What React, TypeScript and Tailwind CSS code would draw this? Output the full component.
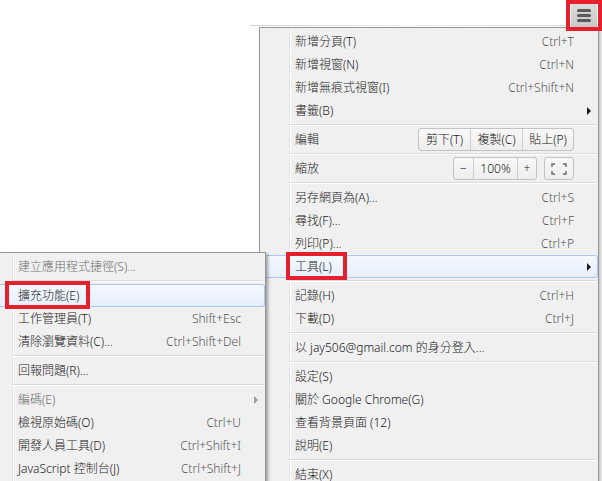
type Entry =
  | { kind: "sep" }
  | { kind: "item"; label: string; shortcut?: string; arrow?: boolean; disabled?: boolean; hl?: boolean }
  | { kind: "edit" }
  | { kind: "zoom" };

const mainMenu: Entry[] = [
  { kind: "item", label: "新增分頁(T)", shortcut: "Ctrl+T" },
  { kind: "item", label: "新增視窗(N)", shortcut: "Ctrl+N" },
  { kind: "item", label: "新增無痕式視窗(I)", shortcut: "Ctrl+Shift+N" },
  { kind: "item", label: "書籤(B)", arrow: true },
  { kind: "sep" },
  { kind: "edit" },
  { kind: "sep" },
  { kind: "zoom" },
  { kind: "sep" },
  { kind: "item", label: "另存網頁為(A)...", shortcut: "Ctrl+S" },
  { kind: "item", label: "尋找(F)...", shortcut: "Ctrl+F" },
  { kind: "item", label: "列印(P)...", shortcut: "Ctrl+P" },
  { kind: "item", label: "工具(L)", arrow: true, hl: true },
  { kind: "sep" },
  { kind: "item", label: "記錄(H)", shortcut: "Ctrl+H" },
  { kind: "item", label: "下載(D)", shortcut: "Ctrl+J" },
  { kind: "sep" },
  { kind: "item", label: "以 jay506@gmail.com 的身分登入..." },
  { kind: "sep" },
  { kind: "item", label: "設定(S)" },
  { kind: "item", label: "關於 Google Chrome(G)" },
  { kind: "item", label: "查看背景頁面 (12)" },
  { kind: "item", label: "說明(E)" },
  { kind: "sep" },
  { kind: "item", label: "結束(X)" },
];

const toolsMenu: Entry[] = [
  { kind: "item", label: "建立應用程式捷徑(S)...", disabled: true },
  { kind: "sep" },
  { kind: "item", label: "擴充功能(E)", hl: true },
  { kind: "item", label: "工作管理員(T)", shortcut: "Shift+Esc" },
  { kind: "item", label: "清除瀏覽資料(C)...", shortcut: "Ctrl+Shift+Del" },
  { kind: "sep" },
  { kind: "item", label: "回報問題(R)..." },
  { kind: "sep" },
  { kind: "item", label: "編碼(E)", arrow: true, disabled: true },
  { kind: "item", label: "檢視原始碼(O)", shortcut: "Ctrl+U" },
  { kind: "item", label: "開發人員工具(D)", shortcut: "Ctrl+Shift+I" },
  { kind: "item", label: "JavaScript 控制台(J)", shortcut: "Ctrl+Shift+J" },
];

function Arrow({ dim }: { dim?: boolean }) {
  return (
    <span
      className={
        "block h-0 w-0 border-y-[4px] border-l-[4px] border-y-transparent " +
        (dim ? "border-l-[#9a9a9a]" : "border-l-[#1a1a1a]")
      }
    />
  );
}

function FullscreenIcon() {
  return (
    <svg width="16" height="12" viewBox="0 0 16 12" fill="none" stroke="#6a6a6a" strokeWidth="1.4">
      <path d="M1 4V1h3M12 1h3v3M15 8v3h-3M4 11H1V8" />
    </svg>
  );
}

const btnGroup =
  "flex h-[23px] overflow-hidden rounded-[3px] border border-[#c3c3c3] bg-gradient-to-b from-[#f8f8f8] to-[#eeeeee]";

function Row({ e }: { e: Entry }) {
  if (e.kind === "sep") {
    return (
      <div className="flex h-[6px] flex-col justify-center pl-[29px] pr-[1px]">
        <div className="h-px bg-[#dcdcdc]" />
        <div className="h-px bg-white" />
      </div>
    );
  }
  if (e.kind === "edit") {
    return (
      <div className="flex h-[23px] items-center pl-[35px] pr-[24px]">
        <span className="flex-1">編輯</span>
        <div className={btnGroup}>
          <span className="flex w-[51px] items-center justify-center">剪下(T)</span>
          <span className="flex w-[52px] items-center justify-center border-l border-[#cfcfcf]">複製(C)</span>
          <span className="flex w-[51px] items-center justify-center border-l border-[#cfcfcf]">貼上(P)</span>
        </div>
      </div>
    );
  }
  if (e.kind === "zoom") {
    return (
      <div className="flex h-[23px] items-center pl-[35px] pr-[24px]">
        <span className="flex-1">縮放</span>
        <div className={btnGroup}>
          <span className="flex w-[19px] items-center justify-center">−</span>
          <span className="flex w-[44px] items-center justify-center border-l border-[#cfcfcf]">100%</span>
          <span className="flex w-[19px] items-center justify-center border-l border-[#cfcfcf]">+</span>
        </div>
        <div className="ml-[7px] flex h-[23px] w-[30px] items-center justify-center rounded-[3px] border border-[#c3c3c3] bg-gradient-to-b from-[#f8f8f8] to-[#eeeeee]">
          <FullscreenIcon />
        </div>
      </div>
    );
  }
  return (
    <div
      className={
        "flex h-[23px] items-center " +
        (e.hl
          ? "ml-[2px] rounded-[3px] bg-gradient-to-b from-[#f5f9fe] to-[#e6eefa] pl-[33px] shadow-[inset_0_0_0_1px_#a9c8ef]"
          : "pl-[35px]")
      }
    >
      <span className={"flex-1 whitespace-nowrap " + (e.disabled ? "text-[#6d6d6d]" : "")}>{e.label}</span>
      {e.shortcut && <span className="whitespace-nowrap text-[#555]">{e.shortcut}</span>}
      <span className="flex w-[24px] justify-start pl-[13px]">{e.arrow && <Arrow dim={e.disabled} />}</span>
    </div>
  );
}

function Menu({ items }: { items: Entry[] }) {
  return (
    <div className="flex flex-col pt-[2px]">
      {items.map((e, i) => (
        <Row key={i} e={e} />
      ))}
    </div>
  );
}

const gutter =
  "bg-[#f0f0f0] bg-[linear-gradient(to_right,transparent_29px,#e2e3e3_29px,#e2e3e3_30px,#ffffff_30px,#ffffff_31px,transparent_31px)]";

export default function App() {
  return (
    <div className="relative h-[481px] w-[602px] overflow-hidden bg-white font-['Segoe_UI','Noto_Sans','Noto_Sans_CJK_TC',sans-serif] text-[12px] font-light text-[#1a1a1a]">
      {/* toolbar edge */}
      <div className="absolute left-[250px] top-[25px] h-px w-[316px] bg-gradient-to-r from-[#cfcfcf] via-[#f2f2f2] to-[#dadada]" />

      {/* menu button */}
      <div className="absolute left-[571px] top-[3px] flex h-[24px] w-[26px] flex-col items-center justify-center gap-[2px] bg-gradient-to-b from-[#dcdcdc] to-[#c9c9c9]">
        <span className="h-[3px] w-[14px] rounded-full bg-[#5b5b5b]" />
        <span className="h-[3px] w-[14px] rounded-full bg-[#5b5b5b]" />
        <span className="h-[3px] w-[14px] rounded-full bg-[#5b5b5b]" />
      </div>

      {/* main chrome menu */}
      <div className={"absolute left-[259px] top-[27px] h-[470px] w-[340px] border border-[#979797] shadow-[2px_2px_3px_rgba(0,0,0,0.25)] " + gutter}>
        <Menu items={mainMenu} />
      </div>

      {/* tools submenu */}
      <div className={"absolute left-[-18px] top-[252px] h-[260px] w-[284px] border border-[#979797] shadow-[2px_2px_3px_rgba(0,0,0,0.35)] " + gutter}>
        <Menu items={toolsMenu} />
      </div>

      {/* red annotation boxes */}
      <div className="absolute left-[566px] top-0 h-[31px] w-[36px] border-[4px] border-[#e3202b]" />
      <div className="absolute left-[286px] top-[252px] h-[28px] w-[61px] border-[4px] border-[#e3202b]" />
      <div className="absolute left-[5px] top-[281px] h-[28px] w-[85px] border-[4px] border-[#e3202b]" />
    </div>
  );
}
